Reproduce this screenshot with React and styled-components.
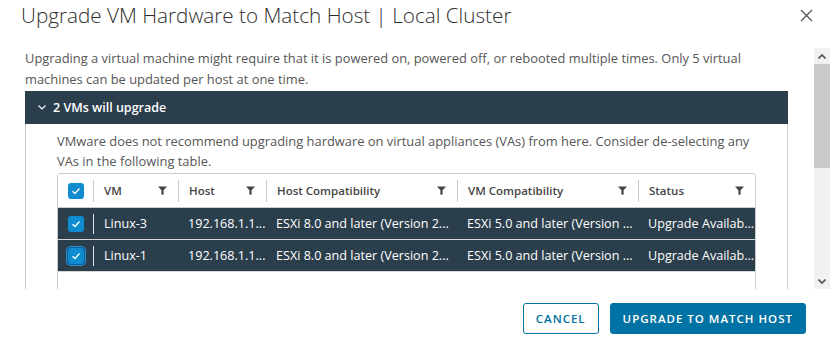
import React from "react";
import styled, { createGlobalStyle } from "styled-components";

const GlobalStyle = createGlobalStyle`
  html, body { margin: 0; padding: 0; background: #fff; }
  body { font-family: "Open Sans", "Noto Sans", sans-serif; color: #565656; }
  * { box-sizing: border-box; }
`;

const DARK = "#2b3e4c";
const BLUE = "#0072a3";

const Modal = styled.div`
  width: 834px;
  height: 345px;
  display: flex;
  flex-direction: column;
  background: #fff;
`;

const Header = styled.div`
  height: 48px;
  display: flex;
  justify-content: space-between;
  align-items: flex-start;
  padding: 0 21px 0 21px;
`;

const Title = styled.h3`
  margin: 0;
  font-size: 20.7px;
  line-height: 30px;
  font-weight: 300;
  color: #2f2f2f;
`;

const CloseButton = styled.button`
  border: 0;
  background: none;
  padding: 0;
  margin-top: 9px;
  width: 13px;
  height: 13px;
  display: flex;
  cursor: pointer;
`;

const Body = styled.div`
  display: flex;
  height: 241px;
  margin-left: 25px;
  width: 805px;
`;

const Viewport = styled.div`
  flex: 1;
  overflow: hidden;
  padding-right: 26px;
`;

const Intro = styled.p`
  margin: 0 0 1px;
  font-size: 12.9px;
  line-height: 21px;
  color: #565656;
`;

const Accordion = styled.section`
  display: flex;
  flex-direction: column;
`;

const AccordionHead = styled.div`
  height: 33px;
  background: ${DARK};
  color: #fff;
  display: flex;
  align-items: center;
  gap: 7px;
  padding-left: 13px;
  font-size: 12.5px;
  font-weight: 600;
`;

const AccordionBody = styled.div`
  border-left: 1px solid #ccc;
  border-right: 1px solid #ccc;
  padding: 7px 20px 20px 31px;
`;

const Note = styled.p`
  margin: 0 0 2px;
  font-size: 12.9px;
  line-height: 20px;
  color: #565656;
`;

const Grid = styled.div`
  width: 699px;
  border: 1px solid #ccc;
  border-radius: 3px;
  overflow: hidden;
  height: 130px;
`;

const Row = styled.div`
  display: grid;
  grid-template-columns: 35px 85px 88px 191px 181px 1fr;
  align-items: center;
  height: ${(p) => (p.$head ? "34px" : "32px")};
  background: ${(p) => (p.$head ? "#fff" : DARK)};
  color: ${(p) => (p.$head ? "#454545" : "#fff")};
  border-bottom: 1px solid ${(p) => (p.$head ? "#ccc" : "#d6d6d6")};
  font-size: ${(p) => (p.$head ? "11.5px" : "12.6px")};
  font-weight: ${(p) => (p.$head ? 600 : 400)};
`;

const CheckCell = styled.div`
  height: 100%;
  display: flex;
  align-items: center;
  justify-content: center;
`;

const Cell = styled.div`
  height: ${(p) => (p.$tall ? "22px" : "20px")};
  display: flex;
  align-items: center;
  justify-content: space-between;
  gap: 6px;
  padding: 0 11px 0 10px;
  border-left: ${(p) => (p.$sep ? `1px solid ${p.$light ? "#e6e6e6" : "#ccc"}` : "0")};
  min-width: 0;
  white-space: nowrap;
  overflow: hidden;
`;

const Box = styled.span`
  width: 16px;
  height: 16px;
  border-radius: 3px;
  background: #0f8bd0;
  display: flex;
  align-items: center;
  justify-content: center;
  box-shadow: ${(p) => (p.$focus ? "0 0 0 1px #0a5d94, 0 0 0 2px #2f8fd0" : "none")};
`;

const ScrollTrack = styled.div`
  width: 16px;
  background: #f1f1f1;
  display: flex;
  flex-direction: column;
`;

const ScrollArrow = styled.div`
  height: 16px;
  display: flex;
  align-items: center;
  justify-content: center;
`;

const ScrollRail = styled.div`
  flex: 1;
`;

const Thumb = styled.div`
  height: 104px;
  background: #c9c9c9;
`;

const Footer = styled.div`
  display: flex;
  justify-content: flex-end;
  gap: 11px;
  padding: 14px 28px 0 0;
`;

const Button = styled.button`
  height: 31px;
  padding: 0 12px;
  border-radius: 3px;
  border: 1px solid ${BLUE};
  background: ${(p) => (p.$primary ? BLUE : "#fff")};
  color: ${(p) => (p.$primary ? "#fff" : BLUE)};
  font-family: "Open Sans", "Noto Sans", sans-serif;
  font-size: 11.5px;
  font-weight: 600;
  letter-spacing: 1px;
  text-transform: uppercase;
  cursor: pointer;
`;

const Funnel = () => (
  <svg width="9" height="9" viewBox="0 0 9 9">
    <path d="M0 0.5H9L5.6 4.2V8.8H3.4V4.2Z" fill="#454545" />
  </svg>
);

const Check = ({ focus }) => (
  <Box $focus={focus}>
    <svg width="10" height="8" viewBox="0 0 10 8">
      <path d="M1.5 4.2L4 6.5L8.5 1.5" fill="none" stroke="#fff" strokeWidth="1.3" />
    </svg>
  </Box>
);

const columns = ["VM", "Host", "Host Compatibility", "VM Compatibility", "Status"];

const vms = [
  { name: "Linux-3", host: "192.168.1.1...", hc: "ESXi 8.0 and later (Version 2...", vc: "ESXi 5.0 and later (Version ...", st: "Upgrade Availab..." },
  { name: "Linux-1", host: "192.168.1.1...", hc: "ESXi 8.0 and later (Version 2...", vc: "ESXi 5.0 and later (Version ...", st: "Upgrade Availab..." },
];

export default function App() {
  return (
    <Modal>
      <GlobalStyle />
      <Header>
        <Title>Upgrade VM Hardware to Match Host | Local Cluster</Title>
        <CloseButton aria-label="Close">
          <svg width="13" height="13" viewBox="0 0 13 13">
            <path d="M1 1L12 12M12 1L1 12" stroke="#565656" strokeWidth="1.3" />
          </svg>
        </CloseButton>
      </Header>
      <Body>
        <Viewport>
          <Intro>
            Upgrading a virtual machine might require that it is powered on, powered off, or rebooted multiple
            times. Only 5 virtual machines can be updated per host at one time.
          </Intro>
          <Accordion>
            <AccordionHead>
              <svg width="8" height="5" viewBox="0 0 8 5">
                <path d="M0.5 0.5L4 4L7.5 0.5" fill="none" stroke="#fff" strokeWidth="1.1" />
              </svg>
              2 VMs will upgrade
            </AccordionHead>
            <AccordionBody>
              <Note>
                VMware does not recommend upgrading hardware on virtual appliances (VAs) from here. Consider
                de-selecting any VAs in the following table.
              </Note>
              <Grid>
                <Row $head>
                  <CheckCell>
                    <Check />
                  </CheckCell>
                  {columns.map((c) => (
                    <Cell key={c} $tall $sep>
                      {c}
                      <Funnel />
                    </Cell>
                  ))}
                </Row>
                {vms.map((vm, i) => (
                  <Row key={vm.name}>
                    <CheckCell>
                      <Check focus={i === 1} />
                    </CheckCell>
                    <Cell $sep $light>{vm.name}</Cell>
                    <Cell>{vm.host}</Cell>
                    <Cell>{vm.hc}</Cell>
                    <Cell>{vm.vc}</Cell>
                    <Cell>{vm.st}</Cell>
                  </Row>
                ))}
              </Grid>
            </AccordionBody>
          </Accordion>
        </Viewport>
        <ScrollTrack>
          <ScrollArrow>
            <svg width="8" height="5" viewBox="0 0 8 5">
              <path d="M0.5 4.5L4 1L7.5 4.5" fill="none" stroke="#505050" strokeWidth="1.6" />
            </svg>
          </ScrollArrow>
          <ScrollRail>
            <Thumb />
          </ScrollRail>
          <ScrollArrow>
            <svg width="8" height="5" viewBox="0 0 8 5">
              <path d="M0.5 0.5L4 4L7.5 0.5" fill="none" stroke="#505050" strokeWidth="1.6" />
            </svg>
          </ScrollArrow>
        </ScrollTrack>
      </Body>
      <Footer>
        <Button>Cancel</Button>
        <Button $primary>Upgrade to Match Host</Button>
      </Footer>
    </Modal>
  );
}
